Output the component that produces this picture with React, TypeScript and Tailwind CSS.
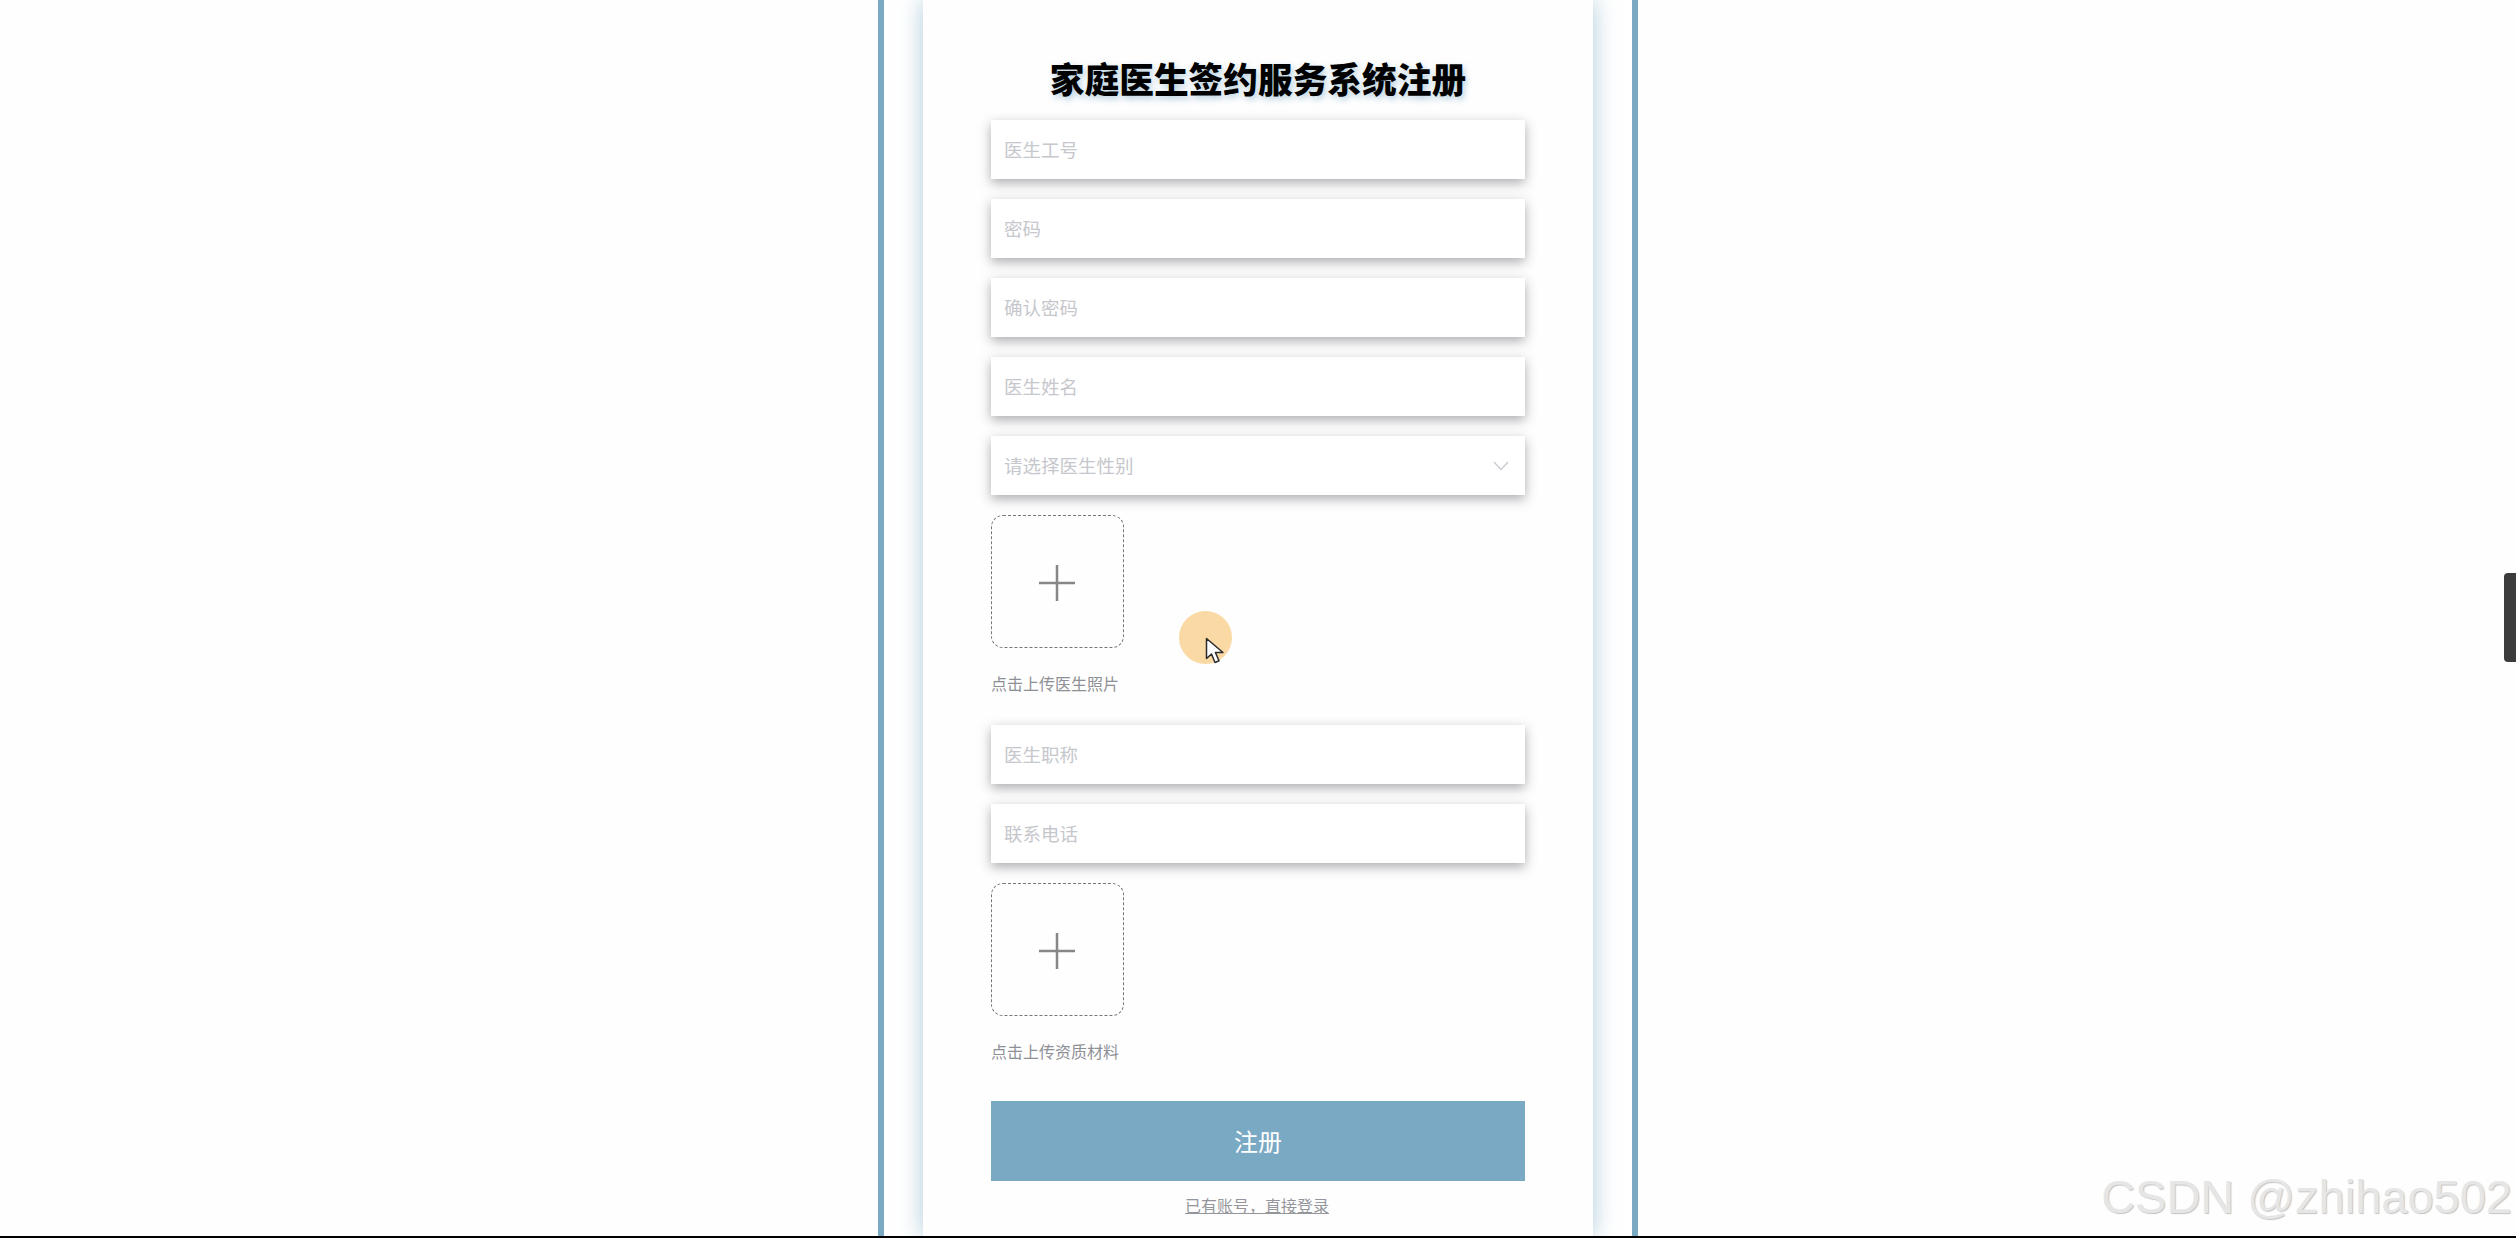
import React from 'react';

const Field = ({ label, select }: { label: string; select?: boolean }) => (
  <div className="h-[59px] w-full bg-white flex items-center justify-between pl-[13px] pr-[16px] text-[18.5px] leading-none text-[#c6c7cc] shadow-[0_4px_11px_rgba(60,60,70,0.42)]">
    <span>{label}</span>
    {select && (
      <svg width="16" height="10" viewBox="0 0 16 10" fill="none" stroke="#c9cacf" strokeWidth="1.2">
        <path d="M1 1l7 7.5L15 1" />
      </svg>
    )}
  </div>
);

const Upload = ({ label, cursor }: { label: string; cursor?: boolean }) => (
  <div className="relative">
    <div className="w-[133px] h-[133px] rounded-xl border border-dashed border-[#77777b] flex items-center justify-center">
      <svg className="mt-[3px] mr-[2px]" width="36" height="36" viewBox="0 0 36 36" stroke="#87878a" strokeWidth="2.5">
        <path d="M18 0v36M0 18h36" />
      </svg>
    </div>
    <div className="mt-[24px] h-[22px] text-[16px] leading-[22px] text-[#8f9096]">{label}</div>
    {cursor && (
      <div className="absolute left-[188px] top-[96px] w-[53px] h-[53px] rounded-full bg-[#fbd9a5]">
        <svg className="absolute left-[26px] top-[26px]" width="20" height="28" viewBox="0 0 20 28">
          <path d="M1.5 1.5v20l5-4.5 3.5 8.5 4-1.8-3.6-8.2H18z" fill="#fff" stroke="#2b2b2b" strokeWidth="1.5" strokeLinejoin="round" />
        </svg>
      </div>
    )}
  </div>
);

export default function App() {
  return (
    <div className="relative h-[1238px] w-full overflow-hidden bg-[#fefefe] flex flex-col font-['Noto_Sans_CJK_SC','Liberation_Sans',sans-serif]">
      <div className="flex-1 min-h-0 flex justify-center">
        {/* Outer frame */}
        <div className="w-[760px] h-full border-x-[6px] border-[#7aa9c4] px-[39px] bg-white">
          {/* Form card */}
          <div className="h-full px-[68px] bg-[#fefefe] shadow-[0_0_22px_rgba(122,169,196,0.62)]">
            <h1 className="pt-[54px] mb-[16px] h-[104px] text-center text-[34.7px] leading-[48px] font-black text-black [text-shadow:2px_3px_6px_rgba(122,169,196,0.55)]">
              家庭医生签约服务系统注册
            </h1>
            <div className="flex flex-col gap-[20px]">
              <Field label="医生工号" />
              <Field label="密码" />
              <Field label="确认密码" />
              <Field label="医生姓名" />
              <Field label="请选择医生性别" select />
              <Upload label="点击上传医生照片" cursor />
            </div>
            <div className="mt-[31px] flex flex-col gap-[20px]">
              <Field label="医生职称" />
              <Field label="联系电话" />
              <Upload label="点击上传资质材料" />
            </div>
            <button className="mt-[39px] block w-full h-[80px] bg-[#7aa9c4] text-white text-[24px]">注册</button>
            <div className="mt-[13px] pr-[2px] text-center text-[16px] leading-[22px]">
              <a href="#" className="text-[#95969b] underline">已有账号，直接登录</a>
            </div>
          </div>
        </div>
      </div>
      <div className="h-[2px] bg-black" />

      {/* Side handle */}
      <div className="absolute right-0 top-[573px] w-[12px] h-[89px] rounded-l bg-[#3c3c3c]" />

      {/* Watermark */}
      <div className="absolute right-[4px] top-[1168px] text-[47px] leading-[58px] whitespace-nowrap font-['Liberation_Sans',sans-serif] text-[#e6e6e6] [text-shadow:1px_1px_1px_#c4c4c4]">
        CSDN @zhihao502
      </div>
    </div>
  );
}
